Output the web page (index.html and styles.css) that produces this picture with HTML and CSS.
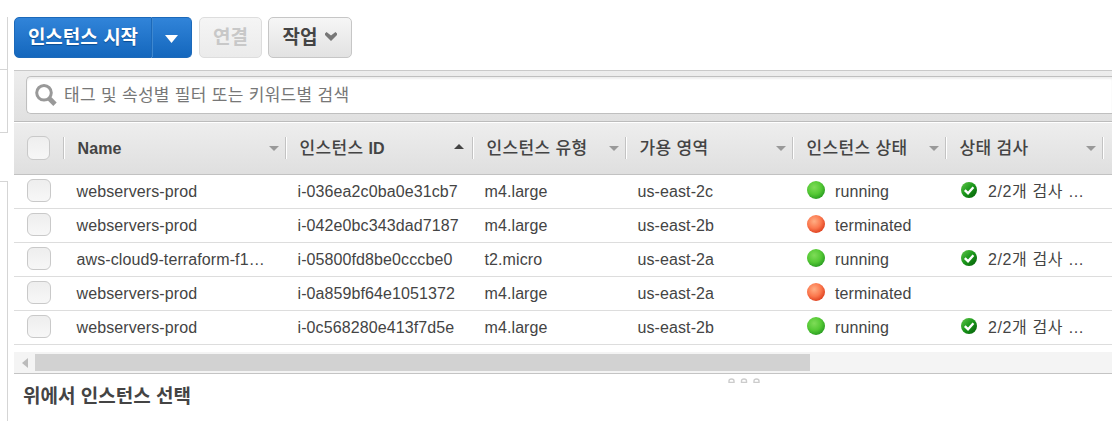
FILE: index.html
```html
<!DOCTYPE html>
<html lang="ko">
<head>
<meta charset="utf-8">
<title>EC2 인스턴스</title>
<link rel="stylesheet" href="styles.css">
</head>
<body>
<svg class="defs" width="0" height="0" aria-hidden="true">
  <defs>
    <radialGradient id="green" cx=".4" cy=".35" r=".65"><stop offset="0" stop-color="#7fdc58"/><stop offset=".6" stop-color="#55c935"/><stop offset="1" stop-color="#2da023"/></radialGradient>
    <radialGradient id="red" cx=".4" cy=".35" r=".65"><stop offset="0" stop-color="#ffae84"/><stop offset=".6" stop-color="#fb784e"/><stop offset="1" stop-color="#e04523"/></radialGradient>
    <linearGradient id="ok" x1="0" y1="0" x2="1" y2="1"><stop offset="0" stop-color="#63c84b"/><stop offset=".5" stop-color="#189519"/><stop offset="1" stop-color="#045c08"/></linearGradient>
    <symbol id="running" viewBox="0 0 18 18"><circle cx="9" cy="9" r="9" fill="url(#green)"/></symbol>
    <symbol id="terminated" viewBox="0 0 18 18"><circle cx="9" cy="9" r="9" fill="url(#red)"/></symbol>
    <symbol id="passed" viewBox="0 0 16 16"><circle cx="8" cy="8" r="8" fill="url(#ok)"/><path d="M3.8 8.2 7 11.2 12.4 5.2" fill="none" stroke="#fff" stroke-width="2.4"/></symbol>
  </defs>
</svg>
<div class="page">
  <aside class="nav"><div class="nav-top"></div><div class="nav-bottom"></div></aside>
  <main class="main">
    <div class="toolbar">
      <div class="split">
        <button class="btn launch">인스턴스 시작</button>
        <button class="btn launch-more" aria-label="more"><svg width="13" height="8" viewBox="0 0 13 8"><path d="M0 0H13L6.500 8Z" fill="#fff"/></svg></button>
      </div>
      <button class="btn connect">연결</button>
      <button class="btn actions"><span>작업</span><svg width="12" height="9" viewBox="0 0 12 9"><path d="M0 1.500 1.500 0 6 3.500 10.500 0 12 1.500V3L6 9 0 3Z" fill="#777"/></svg></button>
    </div>
    <div class="filter">
      <div class="search">
        <svg width="23" height="24" viewBox="0 0 23 24" fill="none" stroke="#999"><circle cx="9" cy="9.800" r="7.300" stroke-width="3"/><path d="M14.300 15.500 20 21.200" stroke-width="4.800"/></svg>
        <span class="placeholder">태그 및 속성별 필터 또는 키워드별 검색</span>
      </div>
    </div>
    <div class="grid head">
      <div class="sel"><i class="check"></i></div>
      <div class="th"><span class="latin">Name</span><i class="down"></i></div>
      <div class="th"><span>인스턴스 <b class="latin">ID</b></span><i class="up"></i></div>
      <div class="th"><span>인스턴스 유형</span><i class="down"></i></div>
      <div class="th"><span>가용 영역</span><i class="down"></i></div>
      <div class="th"><span>인스턴스 상태</span><i class="down"></i></div>
      <div class="th"><span>상태 검사</span><i class="down"></i></div>
      <div class="th"></div>
    </div>
    <div class="grid row"><div class="sel"><i class="check"></i></div><div>webservers-prod</div><div>i-036ea2c0ba0e31cb7</div><div>m4.large</div><div>us-east-2c</div><div class="state"><svg class="dot"><use href="#running"/></svg>running</div><div class="state"><svg class="tick"><use href="#passed"/></svg><span class="ko">2/2개 검사 …</span></div></div>
    <div class="grid row"><div class="sel"><i class="check"></i></div><div>webservers-prod</div><div>i-042e0bc343dad7187</div><div>m4.large</div><div>us-east-2b</div><div class="state"><svg class="dot"><use href="#terminated"/></svg>terminated</div></div>
    <div class="grid row"><div class="sel"><i class="check"></i></div><div>aws-cloud9-terraform-f1…</div><div>i-05800fd8be0cccbe0</div><div>t2.micro</div><div>us-east-2a</div><div class="state"><svg class="dot"><use href="#running"/></svg>running</div><div class="state"><svg class="tick"><use href="#passed"/></svg><span class="ko">2/2개 검사 …</span></div></div>
    <div class="grid row"><div class="sel"><i class="check"></i></div><div>webservers-prod</div><div>i-0a859bf64e1051372</div><div>m4.large</div><div>us-east-2a</div><div class="state"><svg class="dot"><use href="#terminated"/></svg>terminated</div></div>
    <div class="grid row"><div class="sel"><i class="check"></i></div><div>webservers-prod</div><div>i-0c568280e413f7d5e</div><div>m4.large</div><div>us-east-2b</div><div class="state"><svg class="dot"><use href="#running"/></svg>running</div><div class="state"><svg class="tick"><use href="#passed"/></svg><span class="ko">2/2개 검사 …</span></div></div>
    <div class="scroll"><svg width="6" height="10" viewBox="0 0 6 10"><path d="M6 0V10L0 5Z" fill="#bbb"/></svg><div class="thumb"></div></div>
    <div class="grip"><svg width="34" height="5" viewBox="0 0 34 5" fill="none" stroke="#ccc" stroke-width="1.400"><path d="M1 4.500V3Q1 1 3.500 1T6 3V4.500Z"/><path d="M13.500 4.500V3q0-2 2.500-2t2.500 2v1.500z"/><path d="M26 4.500V3q0-2 2.500-2t2.500 2v1.500z"/></svg></div>
    <h2 class="detail">위에서 인스턴스 선택</h2>
  </main>
</div>
</body>
</html>
```
FILE: styles.css
```css
* { box-sizing: border-box; }
body { margin: 0; background: #fff; color: #444; font: 16px/20px "Liberation Sans", "Noto Sans CJK KR", sans-serif; overflow: hidden; }
.defs { position: absolute; }
.page { display: flex; width: 1112px; height: 421px; padding-top: 17px; }
.nav { width: 8px; margin-right: 6px; display: flex; flex-direction: column; justify-content: space-between; }
.nav-top { height: 116px; border: solid #d5d5d5; border-width: 0 1px 1px 0; background: linear-gradient(#d5d5d5, #d5d5d5) 0 52px / 100% 1px no-repeat; }
.nav-bottom { height: 240px; border: solid #d5d5d5; border-width: 1px 1px 0 0; }
.main { width: 1098px; }
.toolbar { display: flex; height: 53px; align-items: flex-start; }
.btn { height: 41px; margin: 0; padding: 0 0 3px; display: flex; align-items: center; justify-content: center; border: 1px solid #c6c6c6; border-radius: 5px; background: linear-gradient(#f6f6f6, #e2e2e2); color: #444; font: bold 19px/24px "Noto Sans CJK KR", sans-serif; white-space: nowrap; }
.split { display: flex; }
.launch { width: 138px; border-color: #1c69b9; border-radius: 5px 0 0 5px; background: linear-gradient(#3184d9, #1467bd); color: #fff; text-shadow: 0 1px 1px #0b4c91; }
.launch-more { width: 40px; border-color: #1c69b9; border-left: 0; border-radius: 0 5px 5px 0; background: linear-gradient(#3184d9, #1467bd); box-shadow: inset 1px 0 #3e88d0; }
.launch-more svg { margin-top: 5px; }
.connect { width: 63px; margin-left: 7px; border-color: #ddd; background: linear-gradient(#f5f5f5, #ebebeb); color: #c8c8c8; }
.actions { width: 84px; margin-left: 6px; gap: 8px; }
.filter { height: 51px; padding: 5px 0 0 12px; border-top: 1px solid #c9c9c9; background: linear-gradient(#ededed, #e0e0e0); }
.search { height: 38px; display: flex; align-items: center; padding-left: 8px; border: 1px solid #bfbfbf; border-right: 0; border-radius: 5px 0 0 5px; background: #fff; box-shadow: inset 0 2px 2px #eee; }
.placeholder { margin: -3px 0 0 6px; color: #777; font: 17px/24px "Noto Sans CJK KR", sans-serif; letter-spacing: .3px; white-space: nowrap; }
.grid { display: grid; grid-template-columns: 49px 222px 187px 153px 167px 153px 157px 10px; align-items: center; white-space: nowrap; }
.head { height: 54px; border-top: 1px solid #bcbcbc; border-bottom: 1px solid #c2c2c2; background: linear-gradient(#eee, #dfdfdf); box-shadow: inset 0 1px #fff; font: 17px/24px "Liberation Sans", "Noto Sans CJK KR", sans-serif; }
.th { height: 22px; display: flex; align-items: center; justify-content: space-between; padding: 0 6px 0 13.5px; border-left: 1px solid #c3c3c3; box-shadow: inset 1px 0 #fff; font-weight: 500; letter-spacing: .35px; }
.th span { padding-top: 2px; }
.th .latin { font-size: 16px; font-weight: bold; letter-spacing: .1px; }
.down, .up { border: 5px solid transparent; border-bottom: 0; border-top-color: #999; }
.up { border-top: 0; border-bottom: 5px solid #444; margin-right: 2px; margin-top: -3px; }
.sel { padding-left: 13px; }
.check { display: block; width: 23px; height: 24px; border: 1px solid #c9c9c9; border-radius: 6px; background: linear-gradient(#eee, #f7f7f7); }
.row { height: 34px; border-bottom: 1px solid #ddd; letter-spacing: .1px; }
.row > div:nth-child(2) { padding-left: 13.5px; }
.row > div:nth-child(n+3) { padding-left: 12.5px; }
.row > .state.state { display: flex; align-items: center; padding-left: 15px; }
.row .check { width: 24px; height: 23px; margin-top: -2px; }
.dot { width: 18px; height: 18px; margin: -3px 10px 0 0; }
.tick { width: 16px; height: 16px; margin: -3px 11px 0 1px; }
.ko { letter-spacing: .6px; }
.scroll { display: flex; align-items: center; height: 22px; margin-top: 7px; padding-left: 8px; border-bottom: 1px solid #c4c4c4; background: #f4f4f4; }
.thumb { width: 775px; height: 17px; margin-left: 7px; background: #d2d2d2; }
.grip { height: 9px; padding: 4px 0 0 714px; line-height: 0; }
.detail { margin: -1px 0 0 9px; font: bold 19px/26px "Noto Sans CJK KR", sans-serif; }
```
